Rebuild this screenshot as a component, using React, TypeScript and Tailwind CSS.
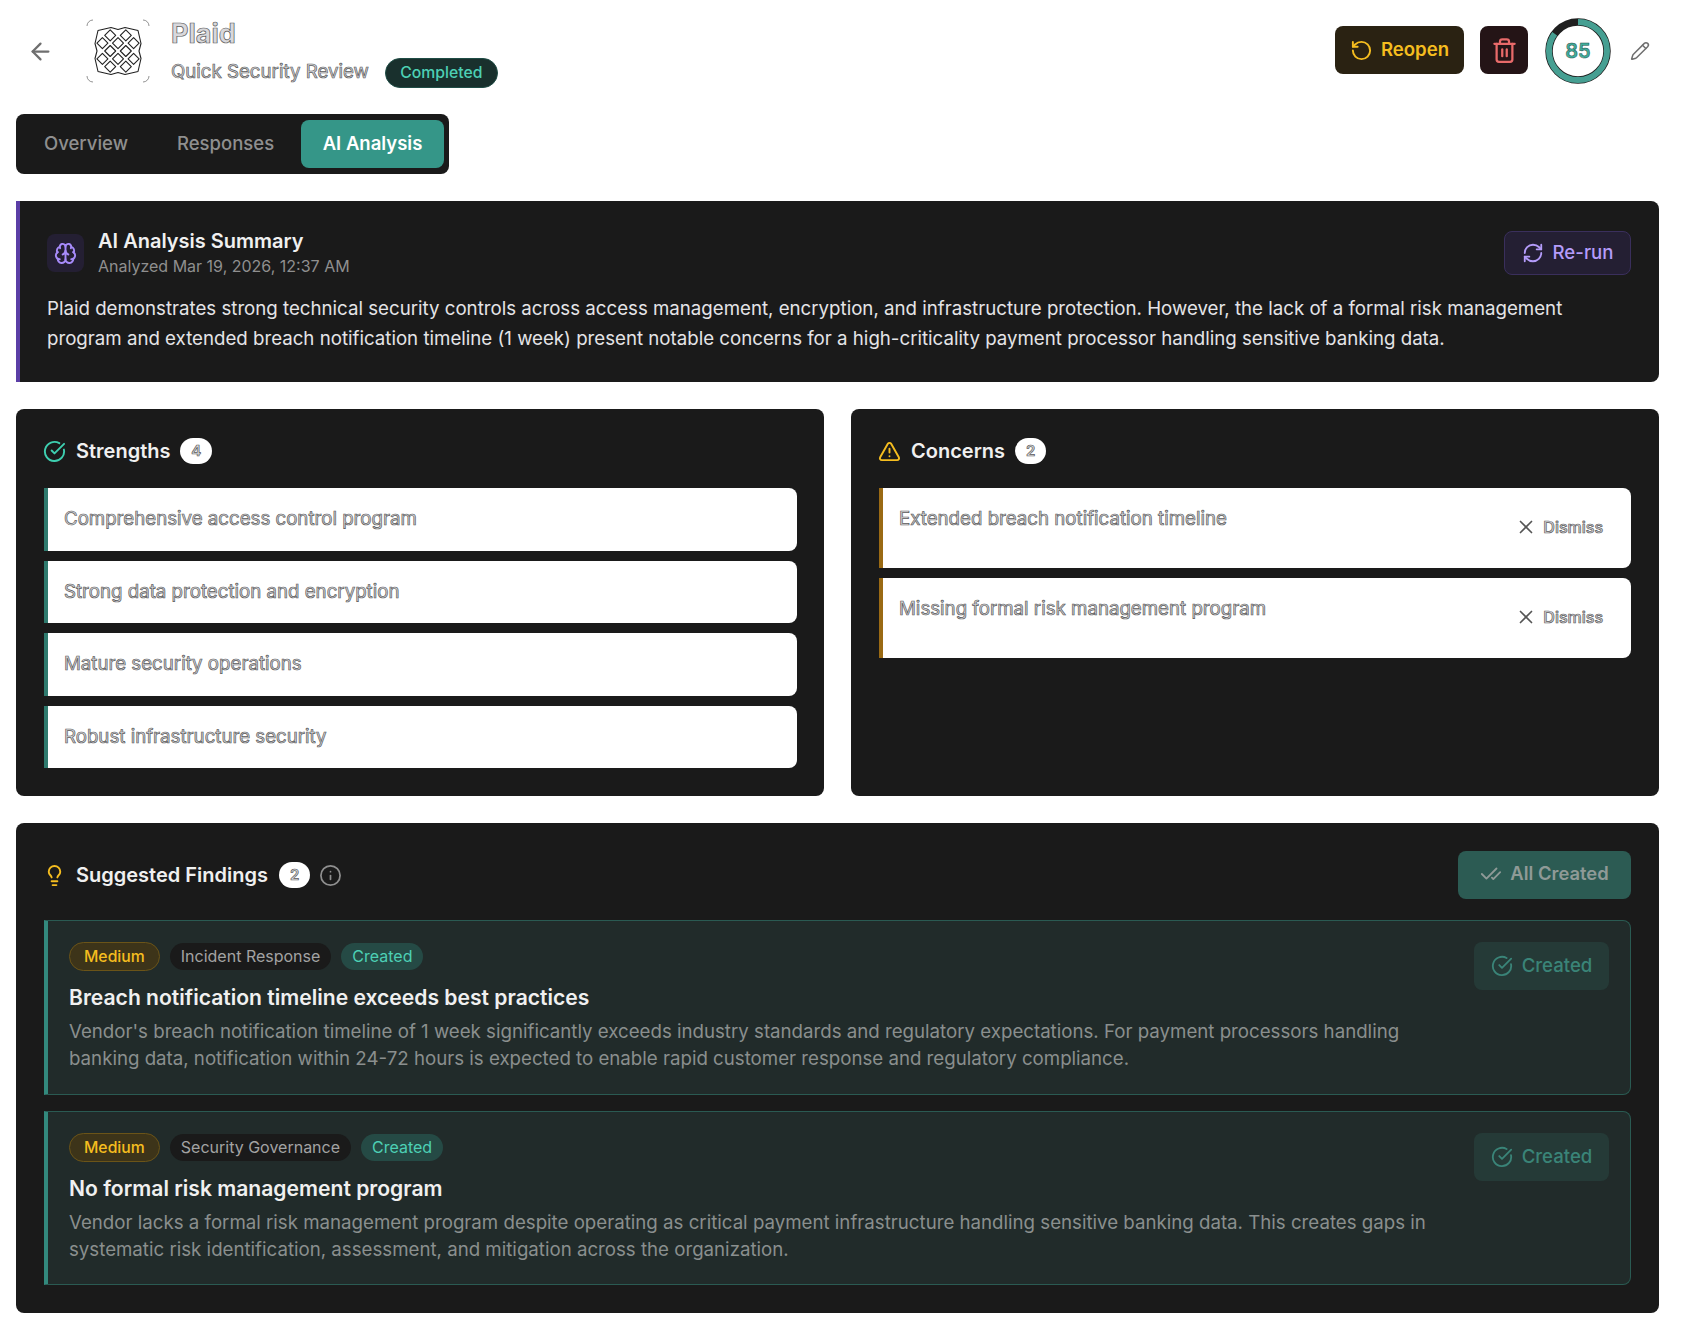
import {
  ArrowLeft,
  Brain,
  CheckCheck,
  CircleCheckBig,
  Info,
  Lightbulb,
  Pencil,
  RefreshCw,
  RotateCcw,
  Trash2,
  TriangleAlert,
  X,
} from "lucide-react";

const halo = "text-[#d8d8dc] [-webkit-text-stroke:0.7px_#5a5a5a]";

const strengths = [
  "Comprehensive access control program",
  "Strong data protection and encryption",
  "Mature security operations",
  "Robust infrastructure security",
];

const concerns = [
  "Extended breach notification timeline",
  "Missing formal risk management program",
];

const findings = [
  {
    title: "Breach notification timeline exceeds best practices",
    category: "Incident Response",
    body: "Vendor's breach notification timeline of 1 week significantly exceeds industry standards and regulatory expectations. For payment processors handling banking data, notification within 24-72 hours is expected to enable rapid customer response and regulatory compliance.",
    height: "h-[175px]",
  },
  {
    title: "No formal risk management program",
    category: "Security Governance",
    body: "Vendor lacks a formal risk management program despite operating as critical payment infrastructure handling sensitive banking data. This creates gaps in systematic risk identification, assessment, and mitigation across the organization.",
    height: "h-[174px]",
  },
];

function PlaidLogo() {
  const d = 7.8;
  const cells: [number, number][] = [
    [-d, -2 * d], [d, -2 * d],
    [-2 * d, -d], [0, -d], [2 * d, -d],
    [-d, 0], [d, 0],
    [-2 * d, d], [0, d], [2 * d, d],
    [-d, 2 * d], [d, 2 * d],
  ];
  const outline =
    "M32 10.500 39 8.500l13 3 3 13-2 7.500 2 7.500-3 13-13 3-7-2-7 2-13-3-3-13 2-7.500-2-7.500 3-13 13-3z";
  return (
    <svg width="64" height="64" viewBox="0 0 64 64" fill="none" className="shrink-0">
      <g stroke="#777" strokeWidth="0.8">
        <path d="M1 7a6 6 0 0 1 6-6M57 1a6 6 0 0 1 6 6M1 57a6 6 0 0 0 6 6M63 57a6 6 0 0 1-6 6" />
      </g>
      <clipPath id="plaid-outline">
        <path d={outline} />
      </clipPath>
      <path d={outline} stroke="#222" strokeWidth="1.100" fill="#fff" strokeLinejoin="round" />
      <g clipPath="url(#plaid-outline)" stroke="#222" strokeWidth="1.100" strokeLinejoin="round">
        {cells.map(([x, y]) => (
          <path
            key={`${x}-${y}`}
            d={`M${32 + x} ${32 + y - 5.500}l5.500 5.500-5.500 5.500-5.500-5.500z`}
          />
        ))}
      </g>
    </svg>
  );
}

function ScoreRing() {
  const c = 2 * Math.PI * 29;
  return (
    <div className="relative h-[66px] w-[66px] shrink-0">
      <svg width="66" height="66" viewBox="0 0 66 66" className="-rotate-90">
        <circle cx="33" cy="33" r="29" fill="#fff" stroke="#1f1f1f" strokeWidth="7.500" />
        <circle
          cx="33"
          cy="33"
          r="29"
          fill="none"
          stroke="#469f92"
          strokeWidth="6"
          strokeDasharray={`${c * 0.85} ${c}`}
        />
      </svg>
      <span className="absolute inset-0 flex items-center justify-center text-[20px] font-semibold text-[#3fae9c] [-webkit-text-stroke:0.5px_#1f4d46]">
        85
      </span>
    </div>
  );
}

function CountBadge({ n }: { n: number }) {
  return (
    <span
      className={`flex h-[26px] w-[31.500px] items-center justify-center rounded-full bg-white text-[15px] font-semibold ${halo}`}
    >
      {n}
    </span>
  );
}

export default function App() {
  return (
    <div className="min-h-[1334px] bg-white pb-[23px] pl-4 pr-[25px] font-['Inter',sans-serif]">
      <header className="flex h-[114px] items-start pt-[19px]">
        <button type="button" className="mt-[18.500px] ml-[10.500px] mr-[32.500px] text-[#6f6f6f]">
          <ArrowLeft size={27} strokeWidth={2} />
        </button>
        <PlaidLogo />
        <div className="ml-[21px]">
          <h1 className={`text-[27px] leading-[30px] font-bold ${halo}`}>Plaid</h1>
          <div className="mt-[7px] flex items-center gap-4">
            <span className={`text-[18.680px] leading-[28px] ${halo}`}>Quick Security Review</span>
            <span className="mt-[2px] rounded-full border border-[#1f4d46] bg-[#19302d] px-[14.500px] py-[3px] text-[15.750px] leading-[22px] font-medium text-[#4dd0b5]">
              Completed
            </span>
          </div>
        </div>
        <div className="-mt-[1px] ml-auto flex items-center">
          <button
            type="button"
            className="mb-[2px] flex h-12 w-[129px] items-center justify-center gap-2 rounded-lg bg-[#2a2212] text-[18.600px] font-semibold text-[#f5bd1f]"
          >
            <RotateCcw size={23} strokeWidth={2} />
            Reopen
          </button>
          <button
            type="button"
            className="mb-[2px] ml-4 flex h-12 w-12 items-center justify-center rounded-lg bg-[#241416] text-[#e86a6a]"
          >
            <Trash2 size={27} strokeWidth={2} />
          </button>
          <div className="ml-[17px]">
            <ScoreRing />
          </div>
          <button type="button" className="ml-[19px] mr-[9px] text-[#6f6f6f]">
            <Pencil size={20} strokeWidth={1.800} />
          </button>
        </div>
      </header>

      <nav className="flex h-[60px] w-[433px] items-center rounded-lg bg-[#1a1a1a] p-[6px] pr-[5px] text-[18.500px] font-medium">
        <span className="w-[155px] pl-[22px] text-[#8f8f8f]">Overview</span>
        <span className="w-[124px] text-[#8f8f8f]">Responses</span>
        <span className="flex h-12 w-[143px] items-center justify-center rounded-lg bg-[#359688] font-semibold text-white">
          AI Analysis
        </span>
      </nav>

      <section className="mt-[27px] h-[181px] rounded-r-lg border-l-4 border-[#5b3ea6] bg-[#1a1a1a] pt-[27px] pr-[28px] pl-[27px]">
        <div className="flex items-start">
          <div className="mt-[6px] flex h-[38px] w-[37px] items-center justify-center rounded-lg bg-[#241f33] text-[#a78bfa]">
            <Brain size={23} strokeWidth={2} />
          </div>
          <div className="ml-[14px]">
            <h2 className="text-[20px] leading-[26px] font-semibold text-[#f0f0f0]">
              AI Analysis Summary
            </h2>
            <p className="text-[16px] leading-[25px] text-[#8f8f8f]">
              Analyzed Mar 19, 2026, 12:37 AM
            </p>
          </div>
          <button
            type="button"
            className="ml-auto mt-[3px] flex h-11 w-[127px] items-center justify-center gap-[9px] rounded-lg border border-[#3a2f5c] bg-[#241f33] text-[18.600px] font-medium text-[#b49cfa]"
          >
            <RefreshCw size={22} strokeWidth={2} />
            Re-run
          </button>
        </div>
        <p className="mt-[15px] text-[18.680px] leading-[30px] text-[#e4e4e7]">
          Plaid demonstrates strong technical security controls across access management, encryption,
          and infrastructure protection. However, the lack of a formal risk management program and
          extended breach notification timeline (1 week) present notable concerns for a high-criticality
          payment processor handling sensitive banking data.
        </p>
      </section>

      <div className="mt-[27px] grid grid-cols-2 gap-[27px]">
        <section className="rounded-lg bg-[#1a1a1a] pt-[27px] pr-[27px] pb-[28px] pl-[28px]">
          <div className="mb-[22px] flex h-[30px] items-center">
            <CircleCheckBig size={23} strokeWidth={2} className="-ml-[1px] text-[#3ecfb0]" />
            <h3 className="mr-[10px] ml-[10px] text-[20px] font-semibold text-[#f0f0f0]">
              Strengths
            </h3>
            <CountBadge n={4} />
          </div>
          <ul className="flex flex-col gap-[10px]">
            {strengths.map((s) => (
              <li
                key={s}
                className={`rounded-r-lg border-l-4 border-[#2f7a6e] bg-white px-[16px] py-[18px] text-[18.680px] leading-[26.500px] ${halo}`}
              >
                {s}
              </li>
            ))}
          </ul>
        </section>

        <section className="rounded-lg bg-[#1a1a1a] pt-[27px] pr-[28px] pb-[28px] pl-[28px]">
          <div className="mb-[22px] flex h-[30px] items-center">
            <TriangleAlert size={23} strokeWidth={2} className="-ml-[1px] text-[#f5bd1f]" />
            <h3 className="mr-[10px] ml-[10px] text-[20px] font-semibold text-[#f0f0f0]">
              Concerns
            </h3>
            <CountBadge n={2} />
          </div>
          <ul className="flex flex-col gap-[10px]">
            {concerns.map((s) => (
              <li
                key={s}
                className="flex h-[80px] items-start justify-between rounded-r-lg border-l-4 border-[#9a6a14] bg-white pt-[17px] pr-[28px] pl-[16px]"
              >
                <span className={`text-[18.680px] leading-[27px] ${halo}`}>{s}</span>
                <span className="mt-[10px] flex items-center gap-[6px]">
                  <X size={22} strokeWidth={1.800} className="text-[#555]" />
                  <span className={`text-[16px] font-medium ${halo}`}>Dismiss</span>
                </span>
              </li>
            ))}
          </ul>
        </section>
      </div>

      <section className="mt-[27px] rounded-lg bg-[#1a1a1a] pt-[28px] pr-[28px] pb-[28px] pl-[28px]">
        <div className="flex h-[48px] items-center">
          <Lightbulb size={23} strokeWidth={2} className="-ml-[1px] text-[#f5bd1f]" />
          <h3 className="mr-[11px] ml-[10px] text-[20px] font-semibold text-[#f0f0f0]">
            Suggested Findings
          </h3>
          <CountBadge n={2} />
          <Info size={23} strokeWidth={1.800} className="ml-[9px] text-[#8f8f8f]" />
          <button
            type="button"
            className="ml-auto flex h-12 w-[173px] items-center justify-center gap-2 rounded-lg bg-[#2c5b53] pb-[2px] text-[18.400px] font-semibold text-[#8f9a97]"
          >
            <CheckCheck size={22} strokeWidth={2} />
            All Created
          </button>
        </div>
        <div className="mt-[21px] flex flex-col gap-[16px]">
          {findings.map((f) => (
            <article
              key={f.title}
              className={`flex justify-between rounded-r-lg border border-l-4 border-[#2a5a52] border-l-[#33897d] bg-[#212b2a] pt-[21px] pr-[21px] pl-[21px] ${f.height}`}
            >
              <div className="w-[1360px]">
                <div className="flex items-center gap-[10px] text-[16px] leading-[21px]">
                  <span className="rounded-full border border-[#6b5418] bg-[#3d3419] px-[14px] py-[3px] text-[15.750px] font-medium text-[#f5bd1f]">
                    Medium
                  </span>
                  <span className="rounded-full bg-[#1a1a1a] px-[11px] py-[3px] text-[#a3a3a3]">
                    {f.category}
                  </span>
                  <span className="rounded-full bg-[#254a45] px-[11px] py-[3px] text-[#4dd0b5]">
                    Created
                  </span>
                </div>
                <h4 className="mt-[12px] text-[21.100px] leading-[30px] font-semibold text-[#f0f0f0]">
                  {f.title}
                </h4>
                <p className="mt-[6px] text-[18.680px] leading-[26.500px] text-[#8a8f8e]">{f.body}</p>
              </div>
              <button
                type="button"
                className="flex h-12 w-[135px] shrink-0 items-center justify-center gap-[9px] rounded-lg bg-[#253a37] text-[18.600px] font-medium text-[#3a8478]"
              >
                <CircleCheckBig size={22} strokeWidth={2} />
                Created
              </button>
            </article>
          ))}
        </div>
      </section>
    </div>
  );
}
